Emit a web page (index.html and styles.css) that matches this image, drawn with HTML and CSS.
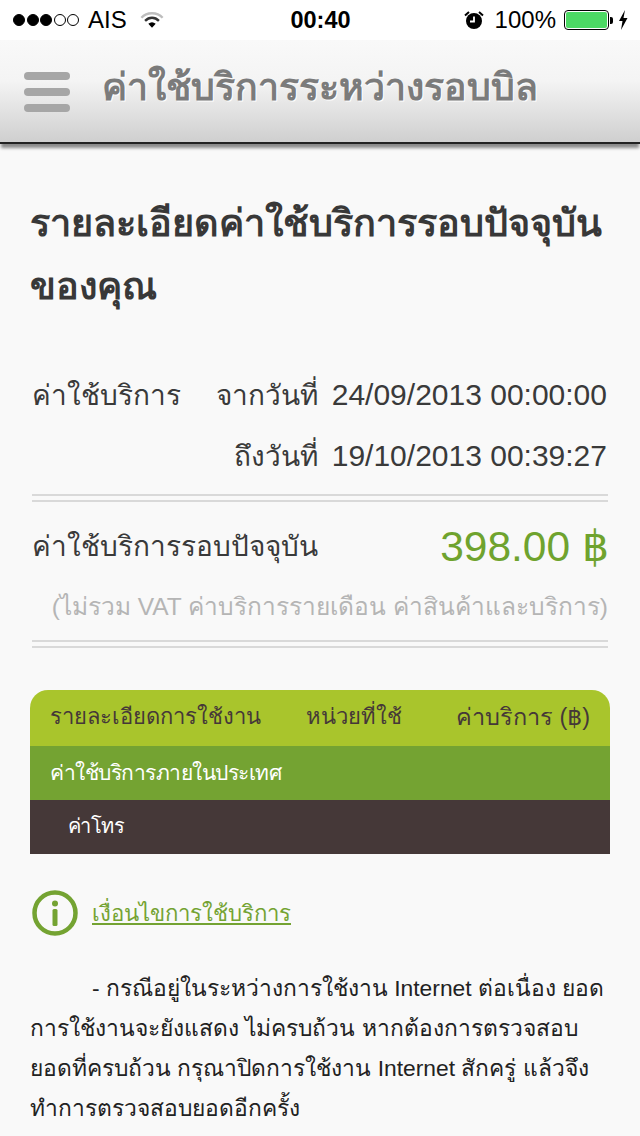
FILE: index.html
```html
<!DOCTYPE html>
<html lang="th">
<head>
<meta charset="utf-8">
<title>ค่าใช้บริการระหว่างรอบบิล</title>
<link rel="stylesheet" href="styles.css">
</head>
<body>
<header class="status">
  <div class="status-left">
    <span class="signal"><i class="dot on"></i><i class="dot on"></i><i class="dot on"></i><i class="dot"></i><i class="dot"></i></span>
    <span class="carrier">AIS</span>
    <svg class="wifi" width="24" height="20" viewBox="0 0 26 20"><path d="M1.5 7.5C7.5 1 18.5 1 24.5 7.5" fill="none" stroke="#bdbdbd" stroke-width="2.6"/><path d="M5.5 11C10 6.5 16 6.5 20.5 11" fill="none" stroke="#333" stroke-width="2.6"/><path d="M9 14C11.500 11.800 14.500 11.800 17 14L13 18.500Z" fill="#000"/></svg>
  </div>
  <div class="clock">00:40</div>
  <div class="status-right">
    <svg class="alarm" width="20" height="20" viewBox="0 0 20 20"><circle cx="10" cy="11" r="8" fill="#000"/><path d="M10 6.500V11.500H6" fill="none" stroke="#fff" stroke-width="1.800"/><path d="M1 5.500L5 2M19 5.500L15 2" stroke="#000" stroke-width="2"/></svg>
    <span class="percent">100%</span>
    <span class="battery"><span class="battery-fill"></span></span><span class="battery-tip"></span>
    <svg class="bolt" width="10" height="20" viewBox="0 0 10 20"><path d="M7 0L1 11H4.500L3 20L9.500 8H5.500Z" fill="#000"/></svg>
  </div>
</header>

<nav class="navbar">
  <div class="burger"><span></span><span></span><span></span></div>
  <h1 class="nav-title">ค่าใช้บริการระหว่างรอบบิล</h1>
</nav>

<main class="content">
  <h2 class="heading">รายละเอียดค่าใช้บริการรอบปัจจุบันของคุณ</h2>

  <section class="period">
    <div class="period-row">
      <span class="period-label">ค่าใช้บริการ</span>
      <span class="period-key">จากวันที่</span>
      <span class="period-val">24/09/2013 00:00:00</span>
    </div>
    <div class="period-row">
      <span class="period-label"></span>
      <span class="period-key">ถึงวันที่</span>
      <span class="period-val">19/10/2013 00:39:27</span>
    </div>
  </section>

  <div class="rule"></div>
  <section class="total">
    <div class="total-row">
      <span class="total-label">ค่าใช้บริการรอบปัจจุบัน</span>
      <span class="total-value">398.00 ฿</span>
    </div>
    <p class="total-note">(ไม่รวม VAT ค่าบริการรายเดือน ค่าสินค้าและบริการ)</p>
  </section>
  <div class="rule"></div>

  <section class="table">
    <div class="thead">
      <span class="col-a">รายละเอียดการใช้งาน</span>
      <span class="col-b">หน่วยที่ใช้</span>
      <span class="col-c">ค่าบริการ (฿)</span>
    </div>
    <div class="tgroup">ค่าใช้บริการภายในประเทศ</div>
    <div class="titem">ค่าโทร</div>
  </section>

  <div class="terms">
    <svg class="info" width="48" height="48" viewBox="0 0 48 48"><circle cx="24" cy="24" r="20.500" fill="none" stroke="#74a332" stroke-width="4.500"/><circle cx="24" cy="14.500" r="3" fill="#74a332"/><rect x="21.500" y="20" width="5" height="17" rx="1.500" fill="#74a332"/></svg>
    <a class="terms-link" href="#">เงื่อนไขการใช้บริการ</a>
  </div>

  <p class="terms-body">- กรณีอยู่ในระหว่างการใช้งาน Internet ต่อเนื่อง ยอด<br>การใช้งานจะยังแสดง ไม่ครบถ้วน หากต้องการตรวจสอบ<br>ยอดที่ครบถ้วน กรุณาปิดการใช้งาน Internet สักครู่ แล้วจึง<br>ทำการตรวจสอบยอดอีกครั้ง</p>
</main>
</body>
</html>
```
FILE: styles.css
```css
* { box-sizing: border-box; }
html, body { margin: 0; padding: 0; }
body {
  width: 640px;
  height: 1136px;
  overflow: hidden;
  background: #f9f9f9;
  font-family: "Liberation Sans", "Noto Sans", "DejaVu Sans", sans-serif;
  color: #3a3a3a;
}
.status {
  height: 40px;
  background: #fff;
  display: flex;
  align-items: center;
  justify-content: space-between;
  padding: 0 12px 0 13px;
  color: #000;
}
.status-left, .status-right { display: flex; align-items: center; width: 200px; }
.status-right { justify-content: flex-end; }
.signal { display: flex; gap: 1.500px; }
.dot { width: 12px; height: 12px; border-radius: 50%; border: 1px solid #000; display: block; }
.dot.on { background: #000; }
.carrier { font-size: 24px; margin-left: 9px; }
.wifi { margin-left: 13px; }
.clock { font-size: 23.500px; font-weight: 700; }
.alarm { flex: none; }
.percent { font-size: 24px; margin: 0 8px 0 11px; }
.battery { width: 45px; height: 20px; border: 1px solid #000; border-radius: 4px; padding: 1px; display: block; }
.battery-fill { display: block; height: 100%; background: #4cd964; border-radius: 2px; }
.battery-tip { width: 3px; height: 7px; background: #000; border-radius: 0 2px 2px 0; margin-left: 1px; }
.bolt { margin-left: 5px; }
.navbar {
  height: 104px;
  background: linear-gradient(#f9f9f9, #f4f4f4 40%, #cfcfcf);
  border-bottom: 2px solid #222;
  box-shadow: 0 5px 3px -1px #8a8a8a;
  display: flex;
  align-items: center;
  padding: 0 24px 8px;
}
.burger { width: 46px; margin-top: 10px; display: flex; flex-direction: column; gap: 8px; filter: blur(0.6px); }
.burger span { height: 8px; border-radius: 4px; background: #a6a6a6; display: block; }
.nav-title {
  margin: 0 0 0 32px;
  font-size: 37.500px;
  font-weight: 700;
  color: #7b7b7b;
  text-shadow: 1px 1px 0 #fff;
  white-space: nowrap;
}
.content { padding: 0 30px; }
.heading {
  margin: 48px 0 0;
  font-size: 37.800px;
  line-height: 63px;
  font-weight: 700;
  color: #383838;
}
.period { margin-top: 46px; padding-bottom: 8px; }
.period-row { display: flex; align-items: center; height: 61px; white-space: nowrap; padding-right: 3px; }
.period-label { width: 178px; flex: none; padding-left: 2px; font-size: 28px; }
.period-key { width: 110px; flex: none; text-align: right; font-size: 28px; }
.period-val { margin-left: auto; font-size: 30px; }
.rule { height: 8px; margin: 0 2px; border-top: 2px solid #d9d9d9; border-bottom: 2px solid #d9d9d9; }
.total { height: 138px; padding: 0 2px; }
.total-row { display: flex; justify-content: space-between; align-items: center; height: 88px; }
.total-label { font-size: 28px; }
.total-value { font-size: 42.500px; color: #6fa32e; margin-right: -1px; }
.total-note { margin: 0; text-align: right; font-size: 24.500px; line-height: 34px; color: #b5b5b5; white-space: nowrap; }
.table { margin-top: 42px; }
.thead {
  height: 56px;
  background: #a9c52c;
  border-radius: 18px 18px 0 0;
  display: flex;
  align-items: center;
  padding: 0 20px 3px;
  font-size: 22px;
  color: #453838;
  white-space: nowrap;
}
.col-a { width: 256px; }
.col-b { width: 150px; }
.col-c { margin-left: auto; font-size: 23.500px; }
.tgroup {
  height: 54px;
  background: #74a332;
  color: #fff;
  font-size: 21px;
  letter-spacing: -0.500px;
  display: flex;
  align-items: center;
  padding: 0 20px 2px;
}
.titem {
  height: 54px;
  background: #453838;
  color: #fff;
  font-size: 20px;
  letter-spacing: -0.600px;
  display: flex;
  align-items: center;
  padding: 0 38px 2px;
}
.terms { display: flex; align-items: center; margin-top: 35px; padding-left: 1px; }
.info { flex: none; filter: blur(0.5px); }
.terms-link { margin-left: 13px; color: #74a332; font-size: 22.200px; }
.terms-body {
  margin: 31px 0 0;
  font-size: 22.800px;
  line-height: 40px;
  text-indent: 62px;
  color: #222;
  white-space: nowrap;
}
```
